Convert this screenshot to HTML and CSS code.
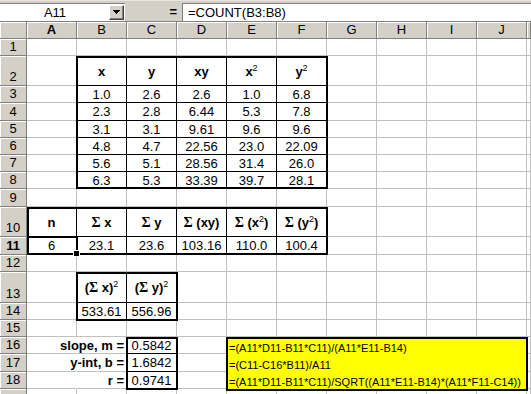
FILE: index.html
```html
<!DOCTYPE html>
<html>
<head>
<meta charset="utf-8">
<link rel="stylesheet" href="styles.css">
</head>
<body>
<div class="app">
  <div class="topstrip"></div>
  <div class="fbar">
    <div class="namebox">
      <div class="nametext">A11</div>
      <div class="ddbtn"><svg width="7" height="4" viewBox="0 0 7 4" shape-rendering="crispEdges"><path d="M0 0h7v1h-1v1h-1v1h-1v1h-1v-1h-1v-1h-1v-1h-1z"/></svg></div>
    </div>
    <div class="eq">=</div>
    <div class="formula">=COUNT(B3:B8)</div>
  </div>
  <div class="sheet">
    <div class="cells">
      <!-- header -->
      <div class="corner"></div>
      <div class="ch act">A</div><div class="ch">B</div><div class="ch">C</div><div class="ch">D</div><div class="ch">E</div><div class="ch">F</div><div class="ch">G</div><div class="ch">H</div><div class="ch">I</div><div class="ch">J</div><div class="ch"></div>
      <!-- 1 -->
      <div class="rh">1</div><div class="c"></div><div class="c"></div><div class="c"></div><div class="c"></div><div class="c"></div><div class="c"></div><div class="c"></div><div class="c"></div><div class="c"></div><div class="c"></div><div class="c"></div>
      <!-- 2 -->
      <div class="rh">2</div><div class="c"></div>
      <div class="c hd br bb"><span>x</span></div><div class="c hd br bb"><span>y</span></div><div class="c hd br bb"><span>xy</span></div><div class="c hd br bb"><span>x<sup>2</sup></span></div><div class="c hd bb"><span>y<sup>2</sup></span></div>
      <div class="c"></div><div class="c"></div><div class="c"></div><div class="c"></div><div class="c"></div>
      <!-- 3 -->
      <div class="rh">3</div><div class="c"></div>
      <div class="c br bb">1.0</div><div class="c br bb">2.6</div><div class="c br bb">2.6</div><div class="c br bb">1.0</div><div class="c bb">6.8</div>
      <div class="c"></div><div class="c"></div><div class="c"></div><div class="c"></div><div class="c"></div>
      <!-- 4 -->
      <div class="rh">4</div><div class="c"></div>
      <div class="c br bb">2.3</div><div class="c br bb">2.8</div><div class="c br bb">6.44</div><div class="c br bb">5.3</div><div class="c bb">7.8</div>
      <div class="c"></div><div class="c"></div><div class="c"></div><div class="c"></div><div class="c"></div>
      <!-- 5 -->
      <div class="rh">5</div><div class="c"></div>
      <div class="c br bb">3.1</div><div class="c br bb">3.1</div><div class="c br bb">9.61</div><div class="c br bb">9.6</div><div class="c bb">9.6</div>
      <div class="c"></div><div class="c"></div><div class="c"></div><div class="c"></div><div class="c"></div>
      <!-- 6 -->
      <div class="rh">6</div><div class="c"></div>
      <div class="c br bb">4.8</div><div class="c br bb">4.7</div><div class="c br bb">22.56</div><div class="c br bb">23.0</div><div class="c bb">22.09</div>
      <div class="c"></div><div class="c"></div><div class="c"></div><div class="c"></div><div class="c"></div>
      <!-- 7 -->
      <div class="rh">7</div><div class="c"></div>
      <div class="c br bb">5.6</div><div class="c br bb">5.1</div><div class="c br bb">28.56</div><div class="c br bb">31.4</div><div class="c bb">26.0</div>
      <div class="c"></div><div class="c"></div><div class="c"></div><div class="c"></div><div class="c"></div>
      <!-- 8 -->
      <div class="rh">8</div><div class="c"></div>
      <div class="c br">6.3</div><div class="c br">5.3</div><div class="c br">33.39</div><div class="c br">39.7</div><div class="c">28.1</div>
      <div class="c"></div><div class="c"></div><div class="c"></div><div class="c"></div><div class="c"></div>
      <!-- 9 -->
      <div class="rh">9</div><div class="c"></div><div class="c"></div><div class="c"></div><div class="c"></div><div class="c"></div><div class="c"></div><div class="c"></div><div class="c"></div><div class="c"></div><div class="c"></div><div class="c"></div>
      <!-- 10 -->
      <div class="rh">10</div>
      <div class="c hd br bb"><span>n</span></div>
      <div class="c hd br bb"><span><b class="sg">Σ</b>&nbsp;x</span></div>
      <div class="c hd br bb"><span><b class="sg">Σ</b>&nbsp;y</span></div>
      <div class="c hd br bb"><span><b class="sg">Σ</b>&nbsp;(xy)</span></div>
      <div class="c hd br bb"><span><b class="sg">Σ</b>&nbsp;(x<sup>2</sup>)</span></div>
      <div class="c hd bb"><span><b class="sg">Σ</b>&nbsp;(y<sup>2</sup>)</span></div>
      <div class="c"></div><div class="c"></div><div class="c"></div><div class="c"></div><div class="c"></div>
      <!-- 11 -->
      <div class="rh act">11</div>
      <div class="c br">6</div><div class="c br">23.1</div><div class="c br">23.6</div><div class="c br">103.16</div><div class="c br">110.0</div><div class="c">100.4</div>
      <div class="c"></div><div class="c"></div><div class="c"></div><div class="c"></div><div class="c"></div>
      <!-- 12 -->
      <div class="rh">12</div><div class="c"></div><div class="c"></div><div class="c"></div><div class="c"></div><div class="c"></div><div class="c"></div><div class="c"></div><div class="c"></div><div class="c"></div><div class="c"></div><div class="c"></div>
      <!-- 13 -->
      <div class="rh">13</div><div class="c"></div>
      <div class="c hd br bb"><span>(<b class="sg">Σ</b>&nbsp;x)<sup>2</sup></span></div>
      <div class="c hd bb"><span>(<b class="sg">Σ</b>&nbsp;y)<sup>2</sup></span></div>
      <div class="c"></div><div class="c"></div><div class="c"></div><div class="c"></div><div class="c"></div><div class="c"></div><div class="c"></div><div class="c"></div>
      <!-- 14 -->
      <div class="rh">14</div><div class="c"></div>
      <div class="c br">533.61</div><div class="c">556.96</div>
      <div class="c"></div><div class="c"></div><div class="c"></div><div class="c"></div><div class="c"></div><div class="c"></div><div class="c"></div><div class="c"></div>
      <!-- 15 -->
      <div class="rh">15</div><div class="c"></div><div class="c"></div><div class="c"></div><div class="c"></div><div class="c"></div><div class="c"></div><div class="c"></div><div class="c"></div><div class="c"></div><div class="c"></div><div class="c"></div>
      <!-- 16 -->
      <div class="rh">16</div><div class="c nr"></div>
      <div class="c lab">slope, m =</div><div class="c bb">0.5842</div>
      <div class="c"></div><div class="c"></div><div class="c"></div><div class="c"></div><div class="c"></div><div class="c"></div><div class="c"></div><div class="c"></div>
      <!-- 17 -->
      <div class="rh">17</div><div class="c nr"></div>
      <div class="c lab">y-int, b =</div><div class="c bb">1.6842</div>
      <div class="c"></div><div class="c"></div><div class="c"></div><div class="c"></div><div class="c"></div><div class="c"></div><div class="c"></div><div class="c"></div>
      <!-- 18 -->
      <div class="rh">18</div><div class="c nr"></div>
      <div class="c lab">r =</div><div class="c">0.9741</div>
      <div class="c"></div><div class="c"></div><div class="c"></div><div class="c"></div><div class="c"></div><div class="c"></div><div class="c"></div><div class="c"></div>
      <!-- 19 -->
      <div class="rh"></div><div class="c"></div><div class="c"></div><div class="c"></div><div class="c"></div><div class="c"></div><div class="c"></div><div class="c"></div><div class="c"></div><div class="c"></div><div class="c"></div><div class="c"></div>
    </div>
    <div class="over">
      <div class="box t-data"></div>
      <div class="box t-sum"></div>
      <div class="box t-sq"></div>
      <div class="box t-res"></div>
      <div class="box yel">
        <div class="yl">=(A11*D11-B11*C11)/(A11*E11-B14)</div>
        <div class="yl">=(C11-C16*B11)/A11</div>
        <div class="yl">=(A11*D11-B11*C11)/SQRT((A11*E11-B14)*(A11*F11-C14))</div>
      </div>
      <div class="sel"></div>
    </div>
  </div>
</div>
</body>
</html>
```

FILE: styles.css
```css
* { box-sizing: border-box; margin: 0; padding: 0; }
html, body { width: 531px; height: 394px; overflow: hidden; background: #fff; }
body {
  font-family: "Liberation Sans", Arial, sans-serif;
  font-size: 13px;
  color: #000;
}
.app { display: flex; flex-direction: column; height: 394px; }

.topstrip {
  height: 3px;
  background: #d4d0c8;
  border-top: 1px solid #e8e6e0;
}

.fbar {
  height: 19px;
  display: flex;
  background: #d4d0c8;
  border-bottom: 1px solid #808080;
}
.namebox {
  width: 125px;
  display: flex;
  background: #fff;
  border-top: 1px solid #808080;
  padding: 1px 1px 1px 0;
}
.nametext {
  flex: 1;
  text-align: center;
  line-height: 16px;
  padding-left: 1px;
}
.ddbtn {
  width: 15px;
  background: #d4d0c8;
  border: 1px solid;
  border-color: #fff #404040 #404040 #fff;
  box-shadow: inset -1px -1px 0 #808080;
  display: flex;
  align-items: center;
  justify-content: center;
}
.ddbtn svg { display: block; fill: #000; margin-top: -1px; }
.eq {
  width: 57px;
  text-align: right;
  padding-right: 5px;
  font-weight: bold;
  line-height: 18px;
}
.formula {
  flex: 1;
  background: #fff;
  border-top: 1px solid #808080;
  border-left: 1px solid #808080;
  padding-left: 5px;
  line-height: 17px;
}

.sheet {
  display: grid;
  height: 372px;
  overflow: hidden;
}
.cells, .over {
  grid-area: 1 / 1;
  display: grid;
  grid-template-columns: 27px repeat(10, 50px) 4px;
  grid-template-rows: 17px 17px 30px 17px 18px 17px 17px 17px 17px 18px 30px 18px 17px 31px 17px 17px 17px 18px 17px 17px;
}
.over { z-index: 1; pointer-events: none; }

.corner, .ch, .rh {
  background: #d4d0c8;
  border-right: 1px solid #808080;
  border-bottom: 1px solid #808080;
  box-shadow: inset 1px 1px 0 #fff;
}
.ch {
  display: flex;
  align-items: center;
  justify-content: center;
  line-height: 16px;
}
.rh {
  display: flex;
  align-items: flex-end;
  justify-content: center;
  line-height: 16px;
}
.act { font-weight: bold; }

.c {
  border-right: 1px solid #c0c0c0;
  border-bottom: 1px solid #c0c0c0;
  display: flex;
  align-items: center;
  justify-content: center;
  white-space: nowrap;
}
.c.br { border-right-color: #000; }
.c.bb { border-bottom-color: #000; }
.c.nr { border-right-color: transparent; }
.hd { font-weight: bold; padding-top: 2px; }
.lab { font-weight: bold; justify-content: flex-end; padding-right: 2px; }
.sg {
  font-family: "Liberation Serif", "Times New Roman", serif;
  font-weight: bold;
  font-size: 14px;
}
sup {
  font-size: 9px;
  font-weight: normal;
  vertical-align: 5px;
  line-height: 0;
}

.box { border: 2px solid #000; margin: 0 -1px 0 -1px; }
.t-data { grid-row: 3 / 10; grid-column: 3 / 8; }
.t-sum { grid-row: 11 / 13; grid-column: 2 / 8; margin-left: 0; }
.t-sq { grid-row: 14 / 16; grid-column: 3 / 5; margin-bottom: -1px; }
.t-res { grid-row: 17 / 20; grid-column: 4 / 5; margin-bottom: -1px; }
.yel {
  grid-row: 17 / 20;
  grid-column: 6 / 12;
  margin-bottom: -2px;
  background: #ffff00;
  display: flex;
  flex-direction: column;
}
.yl {
  flex: 1;
  display: flex;
  align-items: flex-end;
  font-size: 11px;
  line-height: 11px;
  padding: 0 0 1.5px 1px;
  white-space: nowrap;
}
.sel {
  grid-row: 12 / 13;
  grid-column: 2 / 3;
  border: 2px solid #000;
  margin: -1px -1px 0 0;
  position: relative;
}
.sel::after {
  content: "";
  position: absolute;
  right: -4px;
  bottom: -4px;
  width: 5px;
  height: 5px;
  background: #000;
  border: 1px solid #fff;
}
```
